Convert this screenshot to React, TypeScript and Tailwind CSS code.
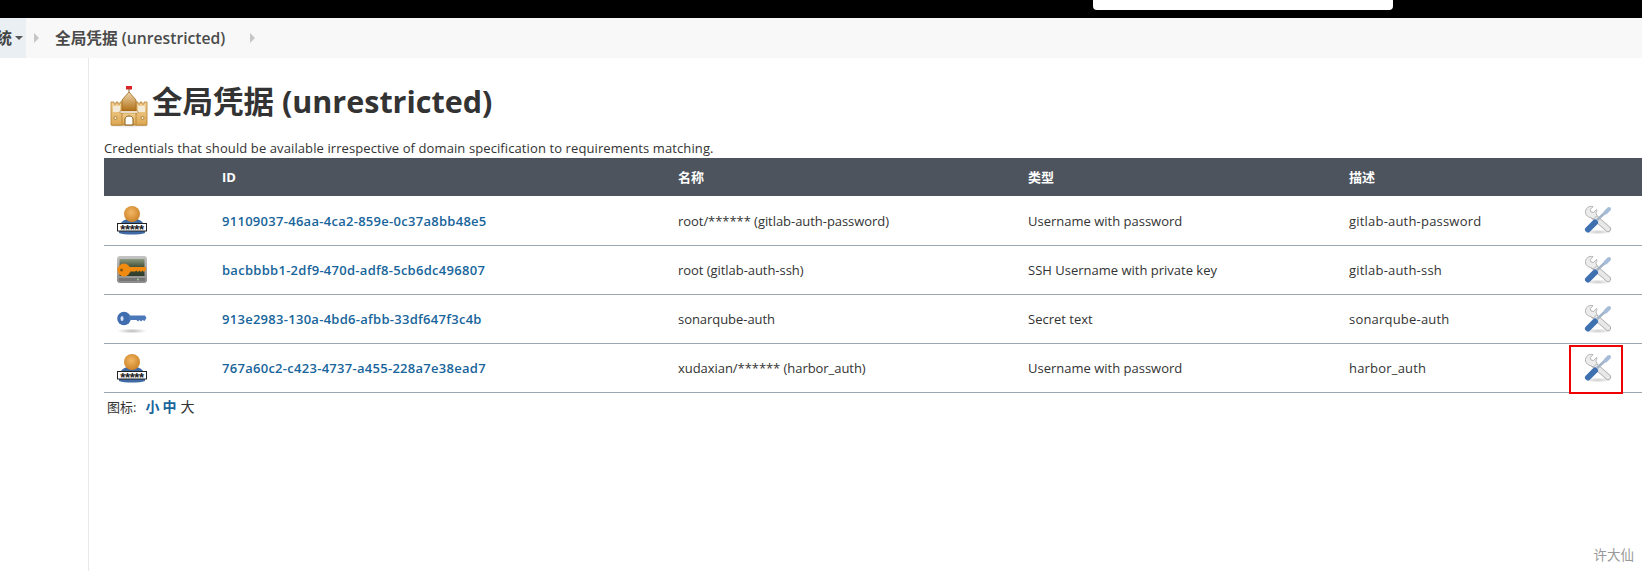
import type { ReactNode } from 'react'

const FONT = "font-['Open_Sans','Noto_Sans_CJK_SC',sans-serif]"

function UserIcon() {
  return (
    <svg width="32" height="32" viewBox="0 0 32 32">
      <defs>
        <radialGradient id="head" cx="0.45" cy="0.4" r="0.65">
          <stop offset="0" stopColor="#f3b765" />
          <stop offset="1" stopColor="#c97f22" />
        </radialGradient>
      </defs>
      <path d="M3 29c0-7 1-12 8-14h10c7 2 8 7 8 14-5 2-21 2-26 0z" fill="#3f6aa6" />
      <circle cx="16" cy="10" r="8" fill="url(#head)" />
      <rect x="1.500" y="19.500" width="29" height="7.500" fill="#fff" stroke="#222" />
      <text x="16" y="30" textAnchor="middle" fontSize="13" fontWeight="700" fill="#222" letterSpacing="-0.4" fontFamily="Liberation Sans">*****</text>
    </svg>
  )
}

function SshKeyIcon() {
  return (
    <svg width="32" height="32" viewBox="0 0 32 32">
      <defs>
        <linearGradient id="box" x1="0" y1="0" x2="0" y2="1">
          <stop offset="0" stopColor="#c4c4c4" />
          <stop offset="1" stopColor="#8a8a8a" />
        </linearGradient>
        <linearGradient id="screen" x1="0" y1="0" x2="0" y2="1">
          <stop offset="0" stopColor="#8c9a80" />
          <stop offset="0.45" stopColor="#46553c" />
          <stop offset="1" stopColor="#2c3a28" />
        </linearGradient>
      </defs>
      <rect x="1" y="2" width="30" height="27" rx="3" fill="url(#box)" />
      <rect x="3.500" y="5" width="25" height="17" fill="url(#screen)" />
      <rect x="3" y="24" width="26" height="3" fill="#757575" />
      <circle cx="22" cy="25.500" r="1" fill="#9fd08a" />
      <circle cx="8" cy="16" r="6.500" fill="#f08a10" />
      <circle cx="5.500" cy="16" r="1.600" fill="#8a5a16" />
      <path d="M13 13h17v3l-2 2-1.500-1.500-1.500 1.500-1.500-1.500-1.500 1.500-1.500-1.500-1.500 1-6 0z" fill="#f08a10" />
    </svg>
  )
}

function BlueKeyIcon() {
  return (
    <svg width="32" height="32" viewBox="0 0 32 32">
      <defs>
        <radialGradient id="shadow" cx="0.5" cy="0.5" r="0.5">
          <stop offset="0" stopColor="#bbb" />
          <stop offset="1" stopColor="#fff" />
        </radialGradient>
      </defs>
      <ellipse cx="16" cy="28" rx="15" ry="2.500" fill="url(#shadow)" />
      <circle cx="8" cy="15.500" r="6.800" fill="#3f6db0" />
      <ellipse cx="6" cy="15.500" rx="1.500" ry="2.600" fill="#dbe5f2" />
      <path d="M13 12.500h16l1.500 2.500-2 3-2-1-1.500 1.500-1.500-1.500-1.500 1.500-1.500-1.500h-7.500z" fill="#4a78b8" />
    </svg>
  )
}

function ToolsIcon() {
  return (
    <svg width="30" height="30" viewBox="0 0 30 30">
      <defs>
        <radialGradient id="toolShadow" cx="0.5" cy="0.5" r="0.5">
          <stop offset="0" stopColor="#ccc" />
          <stop offset="1" stopColor="#fff" />
        </radialGradient>
      </defs>
      <ellipse cx="15" cy="27" rx="14" ry="2.500" fill="url(#toolShadow)" />
      {/* wrench */}
      <path d="M10 11 25 24" stroke="#a8a8a8" strokeWidth="6" strokeLinecap="round" />
      <path d="M10 11 25 24" stroke="#e8e8e8" strokeWidth="4.400" strokeLinecap="round" />
      <path
        d="M10 1.600C5.500.5 2 3.500 2.500 8 3 10.500 5 12 7.500 12.500l3 1.500 3.500-3.500L12.800 8c1-1 1.200-2.500.8-3.500l-3.100 3L8 7l-.7-2.500z"
        fill="#ececec"
        stroke="#a4a4a4"
        strokeWidth="0.8"
      />
      {/* screwdriver */}
      <path d="M14 15 25 5" stroke="#a3b3c6" strokeWidth="2.600" />
      <path d="M22.500 7.500 26 4" stroke="#a6bcd8" strokeWidth="4" strokeLinecap="round" />
      <path d="M5 24.500 12 17.500" stroke="#3f71b1" strokeWidth="6" strokeLinecap="round" />
    </svg>
  )
}

type Row = {
  icon: ReactNode
  id: string
  name: string
  type: string
  desc: string
  boxed?: boolean
}

const ROWS: Row[] = [
  {
    icon: <UserIcon />,
    id: '91109037-46aa-4ca2-859e-0c37a8bb48e5',
    name: 'root/****** (gitlab-auth-password)',
    type: 'Username with password',
    desc: 'gitlab-auth-password',
  },
  {
    icon: <SshKeyIcon />,
    id: 'bacbbbb1-2df9-470d-adf8-5cb6dc496807',
    name: 'root (gitlab-auth-ssh)',
    type: 'SSH Username with private key',
    desc: 'gitlab-auth-ssh',
  },
  {
    icon: <BlueKeyIcon />,
    id: '913e2983-130a-4bd6-afbb-33df647f3c4b',
    name: 'sonarqube-auth',
    type: 'Secret text',
    desc: 'sonarqube-auth',
  },
  {
    icon: <UserIcon />,
    id: '767a60c2-c423-4737-a455-228a7e38ead7',
    name: 'xudaxian/****** (harbor_auth)',
    type: 'Username with password',
    desc: 'harbor_auth',
    boxed: true,
  },
]

function CastleIcon() {
  return (
    <svg width="40" height="42" viewBox="0 0 40 42">
      <defs>
        <linearGradient id="roof" x1="0" y1="0" x2="0" y2="1">
          <stop offset="0" stopColor="#f0d8ae" />
          <stop offset="1" stopColor="#b06f14" />
        </linearGradient>
        <linearGradient id="wall" x1="0" y1="0" x2="0" y2="1">
          <stop offset="0" stopColor="#f3d59c" />
          <stop offset="1" stopColor="#dda853" />
        </linearGradient>
      </defs>
      <ellipse cx="20" cy="40" rx="19" ry="1.500" fill="#eee" />
      <rect x="17" y="0" width="6" height="3.500" fill="#d8232a" />
      <path d="M20 3v3" stroke="#8a6a3a" />
      <rect x="3" y="25" width="34" height="14" fill="url(#wall)" stroke="#b57f2c" />
      <path d="M2 16h3v2h2v-2h2v2h2v-2h2v23H2z" fill="url(#wall)" stroke="#b57f2c" strokeWidth="0.8" />
      <path d="M27 16h2v2h2v-2h2v2h2v-2h3v23H27z" fill="url(#wall)" stroke="#b57f2c" strokeWidth="0.8" />
      <rect x="4" y="20" width="7" height="6" fill="#f4ead8" />
      <rect x="29" y="20" width="7" height="6" fill="#f4ead8" />
      <path d="M20 6l7 8v11H13V14z" fill="url(#roof)" stroke="#a06a1c" strokeWidth="0.8" />
      <path d="M11 25h18v2H11z" fill="#fff" stroke="#a06a1c" strokeWidth="0.5" />
      <path d="M16 39v-6c0-4 8-4 8 0v6z" fill="#fff" stroke="#8a5a14" />
      <circle cx="6.500" cy="32" r="1.500" fill="#fbeed2" stroke="#9c6a1c" strokeWidth="0.7" />
      <circle cx="33.500" cy="32" r="1.500" fill="#fbeed2" stroke="#9c6a1c" strokeWidth="0.7" />
    </svg>
  )
}

function Chevron() {
  return <span className="h-0 w-0 border-y-[5px] border-l-[5px] border-y-transparent border-l-[#c6c6c6]" />
}

export default function App() {
  return (
    <div className={`${FONT} relative flex h-[571px] w-[1642px] flex-col overflow-hidden bg-white text-[13px] text-[#333]`}>
      {/* top bar, search box cut off */}
      <header className="flex h-[18px] shrink-0 items-start bg-black pl-[1093px]">
        <div className="h-[10px] w-[300px] rounded-b-[4px] bg-white" />
      </header>

      {/* breadcrumb */}
      <nav className="flex h-[40px] shrink-0 items-center bg-[#f8f8f8]">
        <div className="flex h-full w-[26px] items-center justify-end gap-[3px] overflow-hidden bg-[#e9eff2] pr-[3px]">
          <span className="shrink-0 text-[16px] font-bold text-[#444]">统</span>
          <span className="h-0 w-0 shrink-0 border-x-[4px] border-t-[4px] border-x-transparent border-t-[#555]" />
        </div>
        <span className="ml-[8px] flex"><Chevron /></span>
        <span className="ml-[16px] pt-[2px] text-[15.7px] font-semibold text-[#4b4b4b]">全局凭据 (unrestricted)</span>
        <span className="ml-[25px] flex"><Chevron /></span>
      </nav>

      <div className="flex min-h-0 flex-1">
        <aside className="w-[89px] shrink-0 border-r border-[#e8e8e8]" />

        <main className="min-w-0 flex-1 pl-[15px]">
          <h1 className="mt-[26px] flex h-[46px] items-center pl-[5px] text-[30.5px] font-bold text-[#333]">
            <CastleIcon />
            <span className="mb-[10px] ml-[3px]">全局凭据 (unrestricted)</span>
          </h1>

          <p className="mt-[8px] h-[20px] leading-[21px] tracking-[0.1px] text-[#333]">
            Credentials that should be available irrespective of domain specification to requirements matching.
          </p>

          <table className="w-[1538px] table-fixed border-collapse">
            <colgroup>
              <col className="w-[118px]" />
              <col className="w-[456px]" />
              <col className="w-[350px]" />
              <col className="w-[321px]" />
              <col className="w-[225px]" />
              <col />
            </colgroup>
            <thead>
              <tr className="h-[38px] bg-[#4d545d] text-left text-white">
                <th />
                <th className="pt-[2px] font-bold">ID</th>
                <th className="pt-[2px] font-bold">名称</th>
                <th className="pt-[2px] font-bold">类型</th>
                <th className="pt-[2px] font-bold">描述</th>
                <th />
              </tr>
            </thead>
            <tbody>
              {ROWS.map(row => (
                <tr key={row.id} className="h-[49px] border-b border-[#9aa7b0]">
                  <td className="pl-[12px] align-middle"><div className="flex">{row.icon}</div></td>
                  <td className="pt-[2px] font-semibold tracking-[0.28px] text-[#18659b]">{row.id}</td>
                  <td className="pt-[2px] tracking-[-0.05px]">{row.name}</td>
                  <td className="pt-[2px]">{row.type}</td>
                  <td className="pt-[2px] tracking-[0.2px]">{row.desc}</td>
                  <td className="relative pl-[9px]">
                    <div className="flex"><ToolsIcon /></div>
                    {row.boxed && (
                      <div className="absolute left-[-5px] top-[1px] h-[49px] w-[54px] border-2 border-[#f00000]" />
                    )}
                  </td>
                </tr>
              ))}
            </tbody>
          </table>

          <div className="mt-[3px] pl-[3px]">
            图标:
            <a className="ml-[9px] text-[14px] font-bold text-[#18659b]">小</a>
            <a className="ml-[3px] text-[14px] font-bold text-[#18659b]">中</a>
            <span className="ml-[4px] text-[14px]">大</span>
          </div>
        </main>
      </div>

      {/* watermark */}
      <span className="absolute bottom-[6px] right-[8px] text-[13.5px] text-[#999]">许大仙</span>
    </div>
  )
}
